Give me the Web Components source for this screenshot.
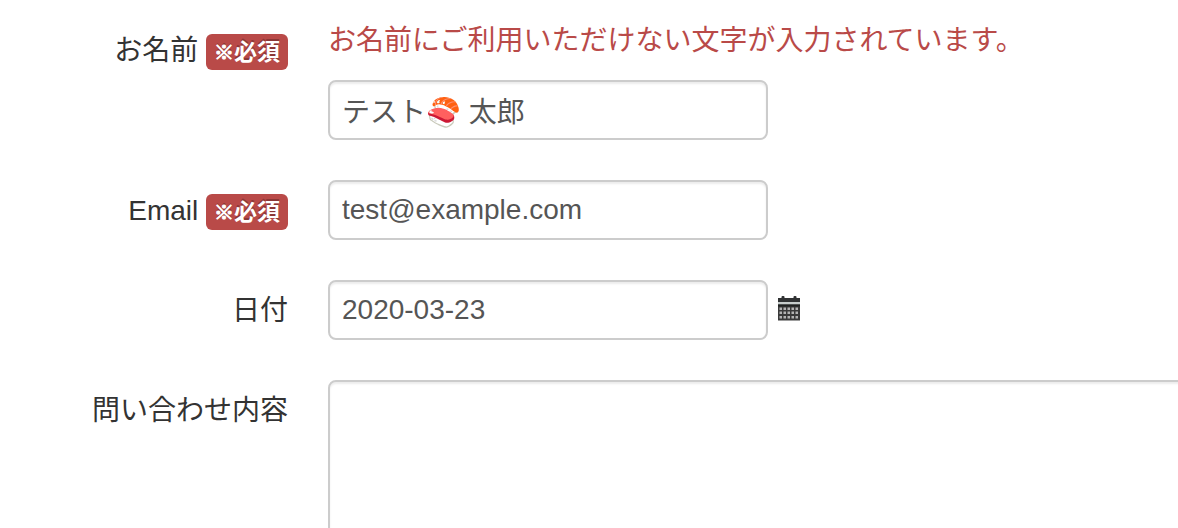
<!DOCTYPE html>
<html lang="ja">
<head>
<meta charset="utf-8">
<meta name="viewport" content="width=device-width, initial-scale=1">
<title>お問い合わせ</title>
<style>
    body {
        margin: 0;
        background-color: #fff;
        color: #333;
        font: 28px/42px "Liberation Sans", "Noto Sans CJK JP", sans-serif;
    }
</style>
</head>
<body>
<contact-form></contact-form>

<script>
const fieldStyle = `
    * {
        box-sizing: border-box;
    }
    input,
    textarea {
        display: block;
        width: 100%;
        margin: 0;
        padding: 8px 12px;
        border: 2px solid #ccc;
        border-radius: 8px;
        background-color: #fff;
        box-shadow: inset 0 2px 2px rgba(0, 0, 0, 0.075);
        color: #555;
        font: inherit;
        outline: 0;
    }
    input {
        height: 60px;
    }
    textarea {
        height: 240px;
        resize: none;
    }
`;

class RequiredBadge extends HTMLElement {

    constructor() {
        super();
        this.shadowDOM = this.attachShadow({mode: "open"});
    }

    connectedCallback() {
        this.render();
    }

    render() {
        this.shadowDOM.innerHTML = `
        <style>
            :host {
                display: inline-block;
                padding: 4px 8px;
                border-radius: 6px;
                background-color: #b94a48;
                color: #fff;
                font-size: 23px;
                font-weight: bold;
                line-height: 28px;
                white-space: nowrap;
                text-shadow: 0 -2px 0 rgba(0, 0, 0, 0.25);
            }
            .mark {
                font-size: 20px;
                line-height: 20px;
                -webkit-text-stroke: 1px #fff;
            }
        </style>
        <span class="mark">※</span><span class="text"><slot></slot></span>`;
    }
}

class FormRow extends HTMLElement {

    constructor() {
        super();
        this.shadowDOM = this.attachShadow({mode: "open"});
    }

    connectedCallback() {
        this.render();
    }

    render() {
        this.shadowDOM.innerHTML = `
        <style>
            :host {
                display: grid;
                grid-template-columns: 288px minmax(0, 1fr);
                column-gap: 40px;
                align-items: start;
            }
            .label {
                padding-top: 10px;
                text-align: right;
            }
        </style>
        <div class="label"><slot name="label"></slot></div>
        <div><slot></slot></div>`;
    }
}

class CalendarIcon extends HTMLElement {

    constructor() {
        super();
        this.shadowDOM = this.attachShadow({mode: "open"});
    }

    connectedCallback() {
        this.render();
    }

    render() {
        this.shadowDOM.innerHTML = `
        <style>
            :host,
            svg {
                display: block;
            }
        </style>
        <svg width="24" height="30" viewBox="0 0 24 30" aria-hidden="true">
            <path d="M1 3h3.500V2q0-1 1-1h1q1 0 1 1v1h9V2q0-1 1-1h1q1 0 1 1v1H23v4H1z" fill="#303233"/>
            <path d="M1 7h22v3H1z" fill="#c6cccb"/>
            <path d="M1 9.500h22V25.500H1z" fill="#3a3a3a"/>
            <path d="M1 9.500h22v2H1z" fill="#1f2120"/>
            <path d="M2.500 12.500h2.500v2.500H2.500zm4 0h2.500v2.500H6.500zm4 0h2.500v2.500h-2.500zm4 0h2.500v2.500h-2.500zm4 0h2.500v2.500h-2.500zM2.500 16.500h2.500v2.500H2.500zm4 0h2.500v2.500H6.500zm4 0h2.500v2.500h-2.500zm4 0h2.500v2.500h-2.500zm4 0h2.500v2.500h-2.500zM2.500 21h2.500v2.500H2.500zm4 0h2.500v2.500H6.500zm4 0h2.500v2.500h-2.500zm4 0h2.500v2.500h-2.500zm4 0h2.500v2.500h-2.500z" fill="#b4b4b4"/>
        </svg>`;
    }
}

class ContactForm extends HTMLElement {

    constructor() {
        super();
        this.shadowDOM = this.attachShadow({mode: "open"});
    }

    connectedCallback() {
        this.render();
    }

    render() {
        this.shadowDOM.innerHTML = `
        <style>
            ${fieldStyle}
            :host {
                display: block;
                height: 100vh;
                overflow: hidden;
            }
            form {
                display: flex;
                flex-direction: column;
                gap: 40px;
                padding-top: 20px;
            }
            .error {
                margin: 0 0 18px;
                color: #b94a48;
            }
            .field {
                max-width: 440px;
            }
            .date {
                display: flex;
                align-items: center;
                gap: 9px;
            }
            .date .field {
                flex: 1;
            }
            /* the message box runs on past the window edge */
            .message {
                width: calc(100% + 40px);
            }
        </style>
        <form>
            <form-row>
                <label slot="label" for="name">お名前 <required-badge>必須</required-badge></label>
                <p class="error">お名前にご利用いただけない文字が入力されています。</p>
                <div class="field">
                    <input type="text" id="name" value="テスト🍣 太郎">
                </div>
            </form-row>
            <form-row>
                <label slot="label" for="email">Email <required-badge>必須</required-badge></label>
                <div class="field">
                    <input type="email" id="email" value="test@example.com">
                </div>
            </form-row>
            <form-row>
                <label slot="label" for="date">日付</label>
                <div class="date">
                    <div class="field">
                        <input type="text" id="date" value="2020-03-23">
                    </div>
                    <calendar-icon></calendar-icon>
                </div>
            </form-row>
            <form-row>
                <label slot="label" for="message">問い合わせ内容</label>
                <div class="message">
                    <textarea id="message"></textarea>
                </div>
            </form-row>
        </form>`;
    }
}

customElements.define("required-badge", RequiredBadge);
customElements.define("form-row", FormRow);
customElements.define("calendar-icon", CalendarIcon);
customElements.define("contact-form", ContactForm);
</script>
</body>
</html>
